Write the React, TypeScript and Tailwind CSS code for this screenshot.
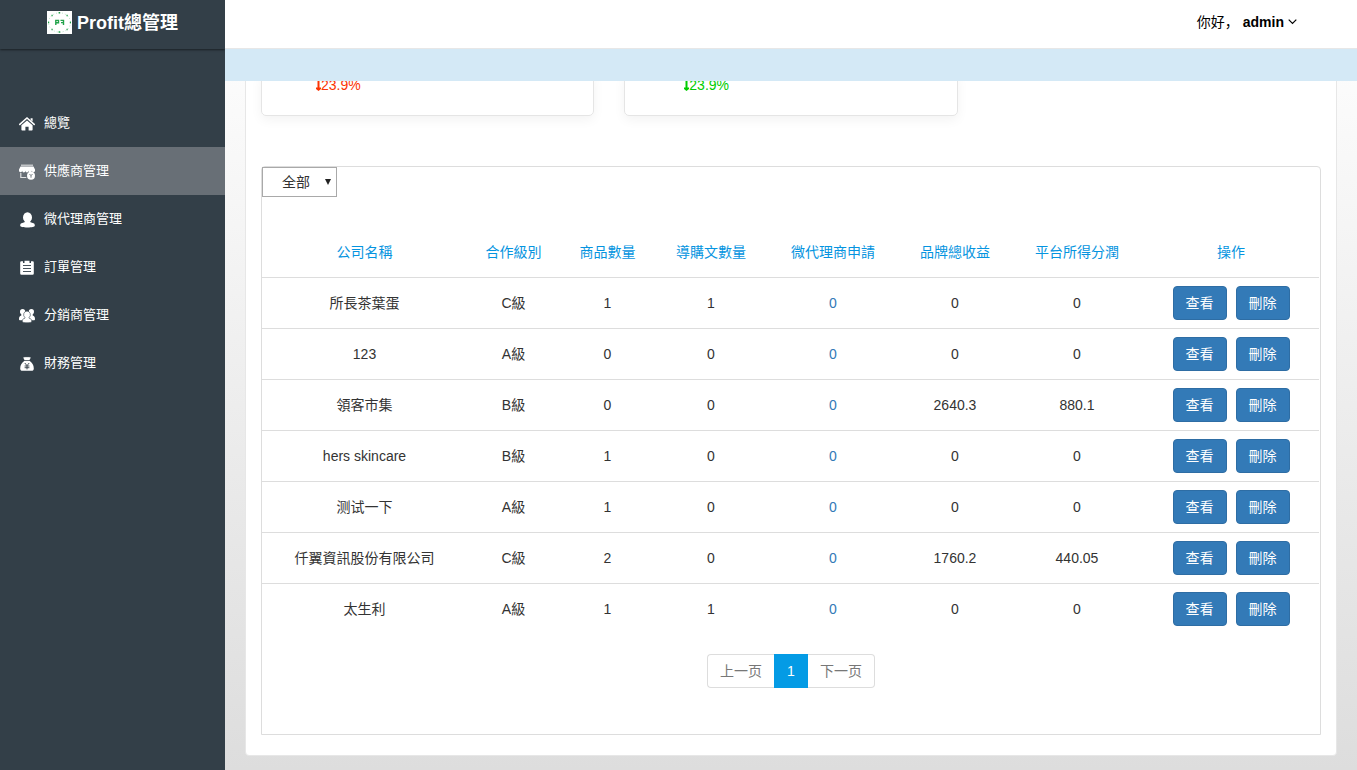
import type { ReactNode } from "react";

const menu = [
  { label: "總覽", icon: "home" },
  { label: "供應商管理", icon: "shop", active: true },
  { label: "微代理商管理", icon: "user" },
  { label: "訂單管理", icon: "order" },
  { label: "分銷商管理", icon: "group" },
  { label: "財務管理", icon: "money" },
];

const columns = [
  { title: "公司名稱", width: "w-[205px]" },
  { title: "合作級別", width: "w-[93px]" },
  { title: "商品數量", width: "w-[95px]" },
  { title: "導購文數量", width: "w-[112px]" },
  { title: "微代理商申請", width: "w-[132px]" },
  { title: "品牌總收益", width: "w-[112px]" },
  { title: "平台所得分潤", width: "w-[132px]" },
  { title: "操作", width: "w-[176px]" },
];

const suppliers = [
  { name: "所長茶葉蛋", level: "C級", goods: 1, articles: 1, applies: 0, income: 0, profit: 0 },
  { name: "123", level: "A級", goods: 0, articles: 0, applies: 0, income: 0, profit: 0 },
  { name: "領客市集", level: "B級", goods: 0, articles: 0, applies: 0, income: 2640.3, profit: 880.1 },
  { name: "hers skincare", level: "B級", goods: 1, articles: 0, applies: 0, income: 0, profit: 0 },
  { name: "测试一下", level: "A級", goods: 1, articles: 0, applies: 0, income: 0, profit: 0 },
  { name: "仟翼資訊股份有限公司", level: "C級", goods: 2, articles: 0, applies: 0, income: 1760.2, profit: 440.05 },
  { name: "太生利", level: "A級", goods: 1, articles: 1, applies: 0, income: 0, profit: 0 },
];

const icons: { [key: string]: ReactNode } = {
  home: (
    <>
      <path d="M.8 8.400 8 2l7.200 6.400" fill="none" stroke="currentColor" strokeWidth="1.600" strokeLinecap="round" />
      <path d="M11.600 2.200h2v3.400l-2-1.700zM8 4.400l5.600 4.800v4.600a.8.8 0 0 1-.8.8H9.600v-3.800H6.400v3.800H3.200a.8.8 0 0 1-.8-.8V9.200z" />
    </>
  ),
  shop: (
    <>
      <path d="M2 .5h12V2H2z" opacity=".6" />
      <path d="M1.500 2.500h13L16 5.500v1a1.600 1.600 0 0 1-3.200.3 1.600 1.600 0 0 1-3.200 0 1.600 1.600 0 0 1-3.200 0 1.600 1.600 0 0 1-3.200 0A1.600 1.600 0 0 1 0 6.500v-1z" />
      <path d="M1.800 9v4.500h5.500" fill="none" stroke="currentColor" strokeWidth="1.200" opacity=".8" />
      <circle cx="12" cy="11.800" r="4" />
      <path d="m10.500 10 1.500 1.700 1.500-1.700M12 11.700v2" fill="none" stroke="#686f76" strokeWidth=".9" />
    </>
  ),
  user: (
    <>
      <ellipse cx="8.500" cy="5.400" rx="4.500" ry="5.200" />
      <path d="M6 9h5l.5 1.200 3 1c.9.4 1.300 1.200 1.300 2.200v.4c0 1-3 1.700-7.300 1.700s-7.300-.7-7.300-1.700v-.4c0-1 .4-1.800 1.300-2.200l3-1z" />
    </>
  ),
  order: (
    <>
      <path d="M2.500 1.200H4v1.800h1.500V.8h5V3H12V1.200h1.500A1.200 1.200 0 0 1 14.800 2.400v11.100a1.300 1.300 0 0 1-1.300 1.300h-11a1.300 1.300 0 0 1-1.300-1.300V2.400A1.200 1.200 0 0 1 2.500 1.200z" />
      <path d="M4 5.500h8M4 8.500h8M4 11.500h8" stroke="#333f48" strokeWidth=".9" />
    </>
  ),
  group: (
    <>
      <circle cx="3.600" cy="3.700" r="2.600" />
      <circle cx="12.400" cy="3.700" r="2.600" />
      <path d="M2.300 5.500h2.500L6.500 9.500 4 12.300H.8c-.5 0-.8-.4-.8-1C0 9 .6 8.200 2.300 7.500zM13.700 5.500h-2.500L9.500 9.500l2.500 2.800h3.200c.5 0 .8-.4.800-1 0-2.300-.6-3.100-2.300-3.800z" />
      <path d="M8 3.100a3.400 3.600 0 0 1 2 6.500l.2.600c1.700.5 2.600 1.300 2.600 3 0 1-1.800 1.600-4.800 1.600s-4.800-.6-4.800-1.600c0-1.700.9-2.500 2.600-3l.2-.6a3.400 3.600 0 0 1 2-6.500z" stroke="#333f48" strokeWidth=".6" />
    </>
  ),
  money: (
    <>
      <path d="M4 1.200c1 .5 1.500.4 2-.5.8.8 1.200.8 2 0 .8.8 1.200.8 2 0 .5.900 1 1 2 .5L10.500 4h-5z" />
      <path d="M5.500 4.800h5c2.500 1.700 4.300 4.400 4.300 7.600 0 1.600-.8 2.400-2.200 2.400H3.400c-1.400 0-2.200-.8-2.200-2.400 0-3.200 1.800-5.900 4.300-7.600z" />
      <path d="m5.800 7 2.200 2.600L10.200 7M5.600 10h4.800M5.600 11.700h4.800M8 9.600v3.800" fill="none" stroke="#333f48" strokeWidth=".9" />
    </>
  ),
};

function MenuIcon({ name }: { name: string }) {
  return (
    <svg viewBox="0 0 16 16" className="mt-[2px] size-4 shrink-0" fill="currentColor" aria-hidden="true">
      {icons[name]}
    </svg>
  );
}

function Logo() {
  return (
    <svg viewBox="0 0 25 23" className="h-[23px] w-[25px] bg-white" fill="none" stroke="#22a34a" aria-hidden="true">
      <ellipse cx="12.500" cy="11.500" rx="11" ry="9.700" strokeWidth=".5" strokeDasharray="1 2" opacity=".6" />
      <path d="M11.600 1.800h1.600M11.600 21h1.600M1 11.500h1.200M22.800 11.500H24M4.500 4.500h1.200M19.500 4.500h1.200M4.500 18.500h1.200M19.500 18.500h1.200" strokeWidth="1.600" />
      <path d="M8.800 14V9.400h2.700v2.400H8.800M13.500 9.400h3V14M14 11.600h2.500" strokeWidth="1.400" />
    </svg>
  );
}

function Trend({ color }: { color: string }) {
  return (
    <p className={`flex items-center text-sm ${color}`}>
      <svg viewBox="0 0 5 14" className="h-[14px] w-[5px]" fill="currentColor" aria-hidden="true">
        <path d="M1.500 0h2v9.500H5V11l-2.500 2L0 11V9.500h1.500z" />
      </svg>
      23.9%
    </p>
  );
}

export default function App() {
  return (
    <div className="flex min-h-screen font-['Liberation_Sans','Noto_Sans_CJK_SC',sans-serif] text-sm text-[#333]">
      <aside className="w-[225px] shrink-0 bg-[#333f48] text-white">
        <div className="flex h-[49px] items-center justify-center gap-[5px] pb-1 shadow-[0_1px_2px_rgba(0,0,0,0.5)]">
          <Logo />
          <h1 className="pt-px text-lg font-bold">Profit總管理</h1>
        </div>
        <nav className="mt-[50px]">
          {menu.map((item) => (
            <a
              key={item.label}
              href="#"
              className={`flex h-12 items-center gap-[9px] pl-[19px] text-[13px] ${item.active ? "bg-[#686f76]" : ""}`}
            >
              <MenuIcon name={item.icon} />
              {item.label}
            </a>
          ))}
        </nav>
      </aside>

      <div className="flex min-w-0 flex-1 flex-col bg-linear-to-b from-white to-[#ddd]">
        <header className="sticky top-0 z-10">
          <div className="flex h-[49px] items-center justify-end border-b border-[#e7e7e7] bg-white pr-[60px] pb-1 text-black">
            <button type="button" className="flex items-center gap-1">
              <span>你好，</span>
              <b>admin</b>
              <svg viewBox="0 0 9 6" className="h-[6px] w-[9px]" fill="none" stroke="currentColor" strokeWidth="1.200" aria-hidden="true">
                <path d="m.7.7 3.800 3.800L8.300.7" />
              </svg>
            </button>
          </div>
          <div className="h-8 bg-[#d4e9f6]" />
        </header>

        <main className="mx-5 -mt-2 mb-[15px] flex-1 rounded-b border border-[#e7e7e7] bg-white px-[15px] pb-5">
          <div className="grid grid-cols-3 gap-[30px]">
            <div className="rounded-b-[5px] border border-[#e5e5e5] pb-5 pl-[54px] shadow-[0_4px_12px_rgba(0,0,0,0.05)]">
              <Trend color="text-[#fc3404]" />
            </div>
            <div className="rounded-b-[5px] border border-[#e5e5e5] pb-5 pl-[59px] shadow-[0_4px_12px_rgba(0,0,0,0.05)]">
              <Trend color="text-[#0c0]" />
            </div>
          </div>

          <section className="mt-[50px] rounded-t border border-[#ddd] pb-[46px]">
            <div className="relative w-[75px]">
              <select
                aria-label="合作級別"
                className="h-[30px] w-full appearance-none border border-[#a9a9a9] bg-white pl-[19px] text-sm text-[#333]"
              >
                <option>全部</option>
                <option>A級</option>
                <option>B級</option>
                <option>C級</option>
              </select>
              <svg viewBox="0 0 6 6" className="pointer-events-none absolute top-3 right-[6px] size-[6px]" fill="#222" aria-hidden="true">
                <path d="M0 0h6L3 6z" />
              </svg>
            </div>

            <div className="pr-px">
              <table className="mt-[30px] w-full table-fixed text-center">
                <thead>
                  <tr className="h-[50px] text-[#0594e0]">
                    {columns.map((col) => (
                      <th key={col.title} className={`font-normal ${col.width}`}>
                        {col.title}
                      </th>
                    ))}
                  </tr>
                </thead>
                <tbody>
                  {suppliers.map((row) => (
                    <tr key={row.name} className="h-[51px] border-t border-[#ddd]">
                      <td>{row.name}</td>
                      <td>{row.level}</td>
                      <td>{row.goods}</td>
                      <td>{row.articles}</td>
                      <td>
                        <a href="#" className="text-[#337ab7]">{row.applies}</a>
                      </td>
                      <td>{row.income}</td>
                      <td>{row.profit}</td>
                      <td>
                        <div className="flex justify-center gap-[9px]">
                          <button type="button" className="h-[34px] rounded border border-[#2e6da4] bg-[#337ab7] px-3 text-white">
                            查看
                          </button>
                          <button type="button" className="h-[34px] rounded border border-[#2e6da4] bg-[#337ab7] px-3 text-white">
                            刪除
                          </button>
                        </div>
                      </td>
                    </tr>
                  ))}
                </tbody>
              </table>
            </div>

            <div className="mt-5 flex justify-center text-[#777]">
              <button type="button" className="h-[34px] rounded-l border border-r-0 border-[#ddd] px-3">上一页</button>
              <button type="button" className="h-[34px] bg-[#049be5] px-[13px] text-white">1</button>
              <button type="button" className="h-[34px] rounded-r border border-l-0 border-[#ddd] px-3">下一页</button>
            </div>
          </section>
        </main>
      </div>
    </div>
  );
}
